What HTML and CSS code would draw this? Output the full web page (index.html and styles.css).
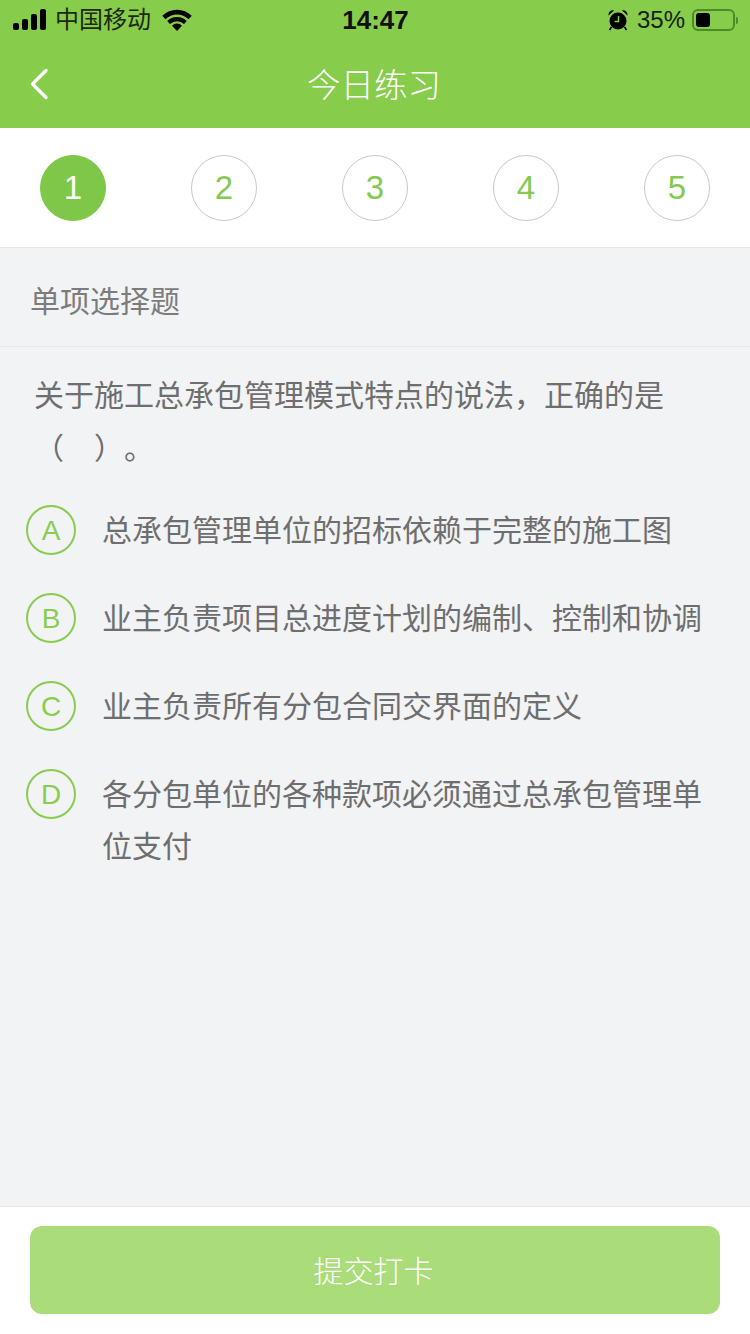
FILE: index.html
```html
<!DOCTYPE html>
<html lang="zh-CN">
<head>
<meta charset="utf-8">
<title>今日练习</title>
<link rel="stylesheet" href="styles.css">
</head>
<body>
<div class="app">
  <header class="top">
    <div class="status">
      <div class="status-side">
        <svg class="signal" width="33" height="22" viewBox="0 0 33 22"><rect x="0" y="14" width="6" height="7" rx="2"/><rect x="9" y="10" width="6" height="11" rx="2"/><rect x="18" y="5" width="6" height="16" rx="2"/><rect x="27" y="0" width="6" height="21" rx="2"/></svg>
        <span class="carrier">中国移动</span>
        <svg class="wifi" width="30" height="22" viewBox="0 0 30 22"><path d="M15 22l-5-5.300a7 7 0 0 1 10 0z"/><path d="M8 15l-2.800-3a14 14 0 0 1 19.600 0l-2.800 3a10 10 0 0 0-14 0z"/><path d="M3.500 10.200L0.300 6.800a21 21 0 0 1 29.400 0l-3.200 3.400a16.500 16.500 0 0 0-23 0z"/></svg>
      </div>
      <div class="time">14:47</div>
      <div class="status-side status-right">
        <svg class="alarm" width="20" height="22" viewBox="1 0 20 22"><circle cx="11" cy="12" r="8.500"/><path d="M1.500 6.500a4.500 4.500 0 0 1 5.500-5zM20.500 6.500a4.500 4.500 0 0 0-5.500-5z"/><path d="M4.500 18l-2 3M17.500 18l2 3" stroke="#000" stroke-width="1.600"/><path d="M11.500 7v5.500H7.500" stroke="#87cc4b" stroke-width="1.500" fill="none"/></svg>
        <span class="percent">35%</span>
        <div class="battery"><div class="battery-level"></div></div>
        <div class="battery-cap"></div>
      </div>
    </div>
    <nav class="nav">
      <svg class="back" width="20" height="32" viewBox="0 0 20 32"><path d="M17 2.500L3.500 16 17 29.500" fill="none" stroke="#fff" stroke-width="3.400" stroke-linecap="round" stroke-linejoin="round"/></svg>
      <h1 class="title">今日练习</h1>
    </nav>
  </header>

  <section class="steps">
    <div class="step step-on">1</div>
    <div class="step">2</div>
    <div class="step">3</div>
    <div class="step">4</div>
    <div class="step">5</div>
  </section>

  <main class="main">
    <div class="kind">单项选择题</div>
    <p class="question">关于施工总承包管理模式特点的说法，正确的是<br>（　）。</p>
    <ul class="options">
      <li class="option"><span class="mark">A</span><span class="option-text">总承包管理单位的招标依赖于完整的施工图</span></li>
      <li class="option"><span class="mark">B</span><span class="option-text">业主负责项目总进度计划的编制、控制和协调</span></li>
      <li class="option"><span class="mark">C</span><span class="option-text">业主负责所有分包合同交界面的定义</span></li>
      <li class="option"><span class="mark">D</span><span class="option-text">各分包单位的各种款项必须通过总承包管理单位支付</span></li>
    </ul>
  </main>

  <footer class="footer">
    <button class="submit" type="button">提交打卡</button>
  </footer>
</div>
</body>
</html>
```
FILE: styles.css
```css
* { box-sizing: border-box; }
html, body { margin: 0; padding: 0; }
body {
  width: 750px;
  height: 1334px;
  overflow: hidden;
  font-family: "Liberation Sans", "Noto Sans CJK SC", sans-serif;
  background: #f2f3f5;
  text-spacing-trim: space-all;
}
.app { height: 1334px; display: flex; flex-direction: column; }
.top { background: #87cc4b; height: 128px; flex: none; }
.status {
  height: 40px;
  display: grid;
  grid-template-columns: 1fr auto 1fr;
  align-items: center;
  padding: 0 12px 0 13px;
  color: #111;
}
.status-side { display: flex; align-items: center; }
.status-right { justify-content: flex-end; }
.signal { margin-right: 9px; }
.carrier { font-size: 24px; line-height: 40px; color: #1c2a12; }
.wifi { margin-left: 11px; }
.time { font-size: 26px; font-weight: 700; }
.alarm { margin-right: 9px; }
.percent { font-size: 24px; color: #16210e; margin-right: 7px; }
.battery {
  width: 43px;
  height: 22px;
  border: 2px solid #4d8a2a;
  border-radius: 6px;
  padding: 2px;
}
.battery-level { width: 14px; height: 14px; background: #000; border-radius: 3px; }
.battery-cap { width: 2px; height: 7px; background: #4d8a2a; margin-left: 1px; border-radius: 0 2px 2px 0; }
.nav {
  position: relative;
  height: 88px;
  display: flex;
  align-items: center;
  justify-content: center;
}
.back { position: absolute; left: 29px; top: 28px; }
.title { margin: 0 2px 0 0; padding-top: 3px; font-size: 33.500px; font-weight: 300; color: #fff; line-height: 88px; }

.steps {
  flex: none;
  height: 120px;
  background: #fff;
  border-bottom: 1px solid #e6e7e9;
  padding: 27px 40px 0;
  display: flex;
  justify-content: space-between;
  align-items: flex-start;
}
.step {
  width: 66px;
  height: 66px;
  border-radius: 50%;
  border: 1px solid #c9c9c9;
  color: #84c952;
  font-size: 33px;
  display: flex;
  align-items: center;
  justify-content: center;
}
.step-on { background: #7fc748; border-color: #7fc748; color: #fff; }

.main { flex: 1; min-height: 0; }
.kind {
  height: 99px;
  padding-left: 30px;
  border-bottom: 1px solid #e6e7e9;
  font-size: 30px;
  line-height: 108px;
  color: #7c7c7c;
}
.question {
  margin: 0;
  padding: 22px 34px 0;
  font-size: 30px;
  line-height: 53px;
  color: #6e6e6e;
}
.options { list-style: none; margin: 31px 0 0; padding: 0 26px; }
.option { display: flex; align-items: flex-start; margin-bottom: 37px; }
.mark {
  flex: none;
  width: 50px;
  height: 50px;
  border-radius: 50%;
  border: 2px solid #88cc50;
  color: #88cc50;
  font-size: 28px;
  padding-top: 2px;
  display: flex;
  align-items: center;
  justify-content: center;
  margin-top: -1px;
}
.option-text {
  margin-left: 26px;
  margin-top: -1px;
  font-size: 30px;
  line-height: 52px;
  color: #6e6e6e;
}
.footer {
  flex: none;
  height: 128px;
  background: #fff;
  border-top: 1px solid #e6e7ea;
  padding: 19px 30px 0;
}
.submit {
  display: block;
  width: 690px;
  height: 88px;
  border: 0;
  border-radius: 12px;
  background: #aadc7a;
  color: #fff;
  font-family: inherit;
  font-size: 30px;
  font-weight: 300;
  padding: 0 3px 3px 0;
}
```
